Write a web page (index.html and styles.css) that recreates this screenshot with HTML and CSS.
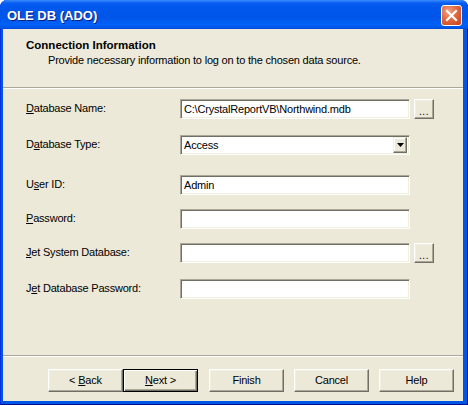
FILE: index.html
```html
<!DOCTYPE html>
<html>
<head>
<meta charset="utf-8">
<link rel="stylesheet" href="styles.css">
</head>
<body>
<div class="window">
  <div class="titlebar">
    <span class="title">OLE DB (ADO)</span>
    <span class="close">
      <svg width="21" height="21" viewBox="0 0 21 21">
        <path d="M6 6 L15 15 M15 6 L6 15" stroke="#fff" stroke-width="2.2" stroke-linecap="square"/>
      </svg>
    </span>
  </div>
  <div class="client">
    <div class="header">
      <div class="h-title">Connection Information</div>
      <div class="h-sub">Provide necessary information to log on to the chosen data source.</div>
    </div>
    <div class="sep"></div>
    <div class="form">
      <div class="row">
        <span class="label"><u>D</u>atabase Name:</span>
        <span class="field">C:\CrystalReportVB\Northwind.mdb</span>
        <span class="browse">...</span>
      </div>
      <div class="row">
        <span class="label">D<u>a</u>tabase Type:</span>
        <span class="field combo"><span class="combo-text">Access</span><span class="arrow"><svg width="7" height="4" viewBox="0 0 7 4"><path d="M0 0 H7 L3.5 4 Z" fill="#000"/></svg></span></span>
      </div>
      <div class="row">
        <span class="label">U<u>s</u>er ID:</span>
        <span class="field">Admin</span>
      </div>
      <div class="row">
        <span class="label"><u>P</u>assword:</span>
        <span class="field"></span>
      </div>
      <div class="row">
        <span class="label"><u>J</u>et System Database:</span>
        <span class="field"></span>
        <span class="browse">...</span>
      </div>
      <div class="row">
        <span class="label">J<u>e</u>t Database Password:</span>
        <span class="field"></span>
      </div>
    </div>
    <div class="sep"></div>
    <div class="buttons">
      <div class="pair">
        <span class="btn"><span>&lt; <u>B</u>ack</span></span>
        <span class="btn default"><span><u>N</u>ext &gt;</span></span>
      </div>
      <span class="btn"><span>Finish</span></span>
      <span class="btn"><span>Cancel</span></span>
      <span class="btn"><span>Help</span></span>
    </div>
  </div>
</div>
</body>
</html>
```
FILE: styles.css
```css
html, body {
  margin: 0;
  padding: 0;
  background: #fff;
}
.window {
  width: 468px;
  height: 405px;
  box-sizing: border-box;
  display: flex;
  flex-direction: column;
  background: #0055E5;
  border-radius: 7px 7px 0 0;
  box-shadow: inset -1px -1px 0 #00138C, inset 1px 0 0 #0831D9;
  font-family: "Liberation Sans", Arial, sans-serif;
  font-size: 11px;
  letter-spacing: -0.2px;
  color: #000;
  overflow: hidden;
}
.titlebar {
  height: 29px;
  flex: none;
  display: flex;
  align-items: center;
  justify-content: space-between;
  padding: 0 6px 0 7px;
  box-sizing: border-box;
  border-radius: 7px 7px 0 0;
  background: linear-gradient(#3A8CFF 0, #0A5EF0 3px, #0058EE 6px, #0055E8 60%, #0062F7 85%, #0056E8 95%, #0049D6 100%);
}
.title {
  color: #fff;
  font-family: "Liberation Sans", Arial, sans-serif;
  font-weight: bold;
  font-size: 13px;
  letter-spacing: 0;
  text-shadow: 1px 1px 0 #0A1E80;
  padding-top: 2px;
}
.close {
  width: 21px;
  height: 21px;
  box-sizing: border-box;
  border: 1px solid #fff;
  border-radius: 3px;
  background: radial-gradient(circle at 35% 30%, #F0A58A 0, #E2693F 45%, #C8401A 100%);
  display: flex;
  align-items: center;
  justify-content: center;
  margin-top: 1px;
}
.close svg {
  display: block;
  margin: -1px;
}
.client {
  flex: 1;
  margin: 0 5px 4px 3px;
  background: #ECE9D8;
  display: flex;
  flex-direction: column;
}
.header {
  height: 58px;
  box-sizing: border-box;
  padding: 10px 0 0 23px;
  background: #EDEADB;
}
.h-title {
  font-weight: bold;
  line-height: 13px;
  font-size: 11.5px;
  letter-spacing: 0;
}
.h-sub {
  padding-left: 22px;
  line-height: 13px;
  margin-top: 2px;
}
.sep {
  height: 1px;
  border-top: 1px solid #ACA899;
  background: #fff;
  flex: none;
}
.form {
  height: 266px;
  box-sizing: border-box;
  padding: 10px 0 0 23px;
  display: grid;
  grid-template-rows: 36px 40px 34px 34px 36px 20px;
  align-content: start;
}
.row {
  display: flex;
  align-items: flex-start;
  height: 20px;
}
.label {
  width: 154px;
  line-height: 19px;
  flex: none;
}
.field {
  width: 230px;
  height: 20px;
  box-sizing: border-box;
  background: #fff;
  border: 1px solid;
  border-color: #ACA899 #fff #fff #ACA899;
  box-shadow: inset 1px 1px 0 #716F64, inset -1px -1px 0 #F1EFE2;
  padding: 0 0 0 3px;
  line-height: 18px;
  white-space: nowrap;
  overflow: hidden;
  flex: none;
}
.combo {
  display: flex;
  justify-content: space-between;
  padding-right: 2px;
}
.combo-text {
  line-height: 18px;
}
.arrow {
  width: 14px;
  height: 16px;
  margin-top: 1px;
  box-sizing: border-box;
  background: #ECE9D8;
  border: 1px solid;
  border-color: #F1EFE2 #716F64 #716F64 #F1EFE2;
  box-shadow: inset -1px -1px 0 #ACA899, inset 1px 1px 0 #fff;
  display: flex;
  align-items: center;
  justify-content: center;
}
.arrow svg {
  display: block;
}
.browse {
  width: 20px;
  height: 20px;
  margin-left: 4px;
  box-sizing: border-box;
  background: #ECE9D8;
  border: 1px solid;
  border-color: #fff #716F64 #716F64 #fff;
  box-shadow: inset -1px -1px 0 #ACA899, inset 1px 1px 0 #F1EFE2;
  display: flex;
  align-items: flex-end;
  justify-content: center;
  line-height: 13px;
  font-size: 10px;
  letter-spacing: 0.5px;
  flex: none;
}
.buttons {
  flex: 1;
  display: flex;
  align-items: flex-start;
  justify-content: flex-end;
  gap: 10px;
  padding: 12px 9px 0 0;
}
.pair {
  display: flex;
  margin-right: 1px;
}
.btn {
  width: 75px;
  height: 23px;
  box-sizing: border-box;
  background: #ECE9D8;
  border: 1px solid;
  border-color: #fff #716F64 #716F64 #fff;
  box-shadow: inset -1px -1px 0 #ACA899, inset 1px 1px 0 #F1EFE2;
  display: flex;
  align-items: center;
  justify-content: center;
  line-height: 13px;
}
.btn.default {
  border: 1px solid #000;
  box-shadow: inset 1px 1px 0 #fff, inset -1px -1px 0 #716F64, inset -2px -2px 0 #ACA899;
}
```
